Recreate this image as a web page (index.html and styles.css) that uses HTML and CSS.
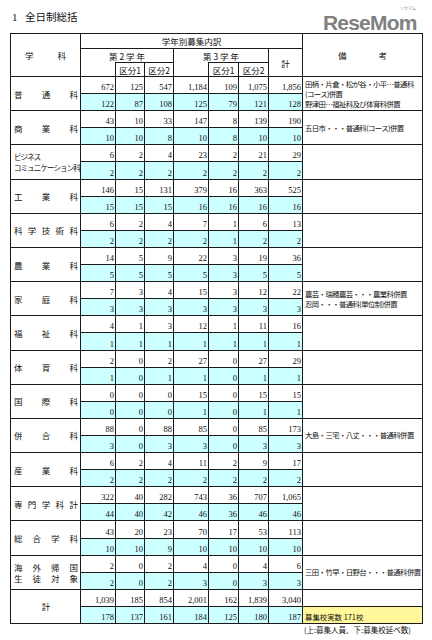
FILE: index.html
```html
<!DOCTYPE html>
<html lang="ja">
<head>
<meta charset="utf-8">
<title>全日制総括</title>
<link rel="stylesheet" href="styles.css">
</head>
<body>
<div class="page">
  <div class="title"><span class="num">1</span><span class="ttl">全日制総括</span></div>
  <div class="logo"><span class="kana">リセマム</span><span class="word">ReseMom</span></div>
  <table class="grid">
    <colgroup>
      <col class="c-subj"><col class="c-a"><col class="c-b"><col class="c-b"><col class="c-a"><col class="c-c"><col class="c-c"><col class="c-t"><col class="c-note">
    </colgroup>
    <thead>
      <tr class="h1">
        <th rowspan="3" class="hsubj"><span>学</span><span>科</span></th>
        <th colspan="7">学年別募集内訳</th>
        <th rowspan="3" class="hnote"><span>備</span><span>考</span></th>
      </tr>
      <tr class="h2">
        <th colspan="3" class="year">第 2 学 年</th>
        <th colspan="3" class="year">第 3 学 年</th>
        <th rowspan="2">計</th>
      </tr>
      <tr class="h3">
        <th class="blank"></th><th>区分1</th><th>区分2</th>
        <th class="blank"></th><th>区分1</th><th>区分2</th>
      </tr>
    </thead>
    <tbody>
      <tr class="top"><td rowspan="2" class="subj"><div class="dist"><span>普</span><span>通</span><span>科</span></div></td><td>672</td><td>125</td><td>547</td><td>1,184</td><td>109</td><td>1,075</td><td>1,856</td><td rowspan="2" class="note">田柄・片倉・松が谷・小平…普通科<br>(コース)併置<br>野津田…福祉科及び体育科併置</td></tr>
      <tr class="bot"><td>122</td><td>87</td><td>108</td><td>125</td><td>79</td><td>121</td><td>128</td></tr>

      <tr class="top"><td rowspan="2" class="subj"><div class="dist"><span>商</span><span>業</span><span>科</span></div></td><td>43</td><td>10</td><td>33</td><td>147</td><td>8</td><td>139</td><td>190</td><td rowspan="2" class="note">五日市・・・普通科(コース)併置</td></tr>
      <tr class="bot"><td>10</td><td>10</td><td>8</td><td>10</td><td>8</td><td>10</td><td>10</td></tr>

      <tr class="top"><td rowspan="2" class="subj"><div class="lines"><span>ビジネス</span><span>コミュニケーション科</span></div></td><td>6</td><td>2</td><td>4</td><td>23</td><td>2</td><td>21</td><td>29</td><td rowspan="2" class="note"></td></tr>
      <tr class="bot"><td>2</td><td>2</td><td>2</td><td>2</td><td>2</td><td>2</td><td>2</td></tr>

      <tr class="top"><td rowspan="2" class="subj"><div class="dist"><span>工</span><span>業</span><span>科</span></div></td><td>146</td><td>15</td><td>131</td><td>379</td><td>16</td><td>363</td><td>525</td><td rowspan="2" class="note"></td></tr>
      <tr class="bot"><td>15</td><td>15</td><td>15</td><td>16</td><td>16</td><td>16</td><td>16</td></tr>

      <tr class="top"><td rowspan="2" class="subj"><div class="dist"><span>科</span><span>学</span><span>技</span><span>術</span><span>科</span></div></td><td>6</td><td>2</td><td>4</td><td>7</td><td>1</td><td>6</td><td>13</td><td rowspan="2" class="note"></td></tr>
      <tr class="bot"><td>2</td><td>2</td><td>2</td><td>2</td><td>1</td><td>2</td><td>2</td></tr>

      <tr class="top"><td rowspan="2" class="subj"><div class="dist"><span>農</span><span>業</span><span>科</span></div></td><td>14</td><td>5</td><td>9</td><td>22</td><td>3</td><td>19</td><td>36</td><td rowspan="2" class="note"></td></tr>
      <tr class="bot"><td>5</td><td>5</td><td>5</td><td>5</td><td>3</td><td>5</td><td>5</td></tr>

      <tr class="top"><td rowspan="2" class="subj"><div class="dist"><span>家</span><span>庭</span><span>科</span></div></td><td>7</td><td>3</td><td>4</td><td>15</td><td>3</td><td>12</td><td>22</td><td rowspan="2" class="note">農芸・瑞穂農芸・・・農業科併置<br>忍岡・・・普通科(単位制)併置</td></tr>
      <tr class="bot"><td>3</td><td>3</td><td>3</td><td>3</td><td>3</td><td>3</td><td>3</td></tr>

      <tr class="top"><td rowspan="2" class="subj"><div class="dist"><span>福</span><span>祉</span><span>科</span></div></td><td>4</td><td>1</td><td>3</td><td>12</td><td>1</td><td>11</td><td>16</td><td rowspan="2" class="note"></td></tr>
      <tr class="bot"><td>1</td><td>1</td><td>1</td><td>1</td><td>1</td><td>1</td><td>1</td></tr>

      <tr class="top"><td rowspan="2" class="subj"><div class="dist"><span>体</span><span>育</span><span>科</span></div></td><td>2</td><td>0</td><td>2</td><td>27</td><td>0</td><td>27</td><td>29</td><td rowspan="2" class="note"></td></tr>
      <tr class="bot"><td>1</td><td>0</td><td>1</td><td>1</td><td>0</td><td>1</td><td>1</td></tr>

      <tr class="top"><td rowspan="2" class="subj"><div class="dist"><span>国</span><span>際</span><span>科</span></div></td><td>0</td><td>0</td><td>0</td><td>15</td><td>0</td><td>15</td><td>15</td><td rowspan="2" class="note"></td></tr>
      <tr class="bot"><td>0</td><td>0</td><td>0</td><td>1</td><td>0</td><td>1</td><td>1</td></tr>

      <tr class="top"><td rowspan="2" class="subj"><div class="dist"><span>併</span><span>合</span><span>科</span></div></td><td>88</td><td>0</td><td>88</td><td>85</td><td>0</td><td>85</td><td>173</td><td rowspan="2" class="note">大島・三宅・八丈・・・普通科併置</td></tr>
      <tr class="bot"><td>3</td><td>0</td><td>3</td><td>3</td><td>0</td><td>3</td><td>3</td></tr>

      <tr class="top"><td rowspan="2" class="subj"><div class="dist"><span>産</span><span>業</span><span>科</span></div></td><td>6</td><td>2</td><td>4</td><td>11</td><td>2</td><td>9</td><td>17</td><td rowspan="2" class="note"></td></tr>
      <tr class="bot"><td>2</td><td>2</td><td>2</td><td>2</td><td>2</td><td>2</td><td>2</td></tr>

      <tr class="top"><td rowspan="2" class="subj"><div class="dist"><span>専</span><span>門</span><span>学</span><span>科</span><span>計</span></div></td><td>322</td><td>40</td><td>282</td><td>743</td><td>36</td><td>707</td><td>1,065</td><td rowspan="2" class="note"></td></tr>
      <tr class="bot"><td>44</td><td>40</td><td>42</td><td>46</td><td>36</td><td>46</td><td>46</td></tr>

      <tr class="top"><td rowspan="2" class="subj"><div class="dist"><span>総</span><span>合</span><span>学</span><span>科</span></div></td><td>43</td><td>20</td><td>23</td><td>70</td><td>17</td><td>53</td><td>113</td><td rowspan="2" class="note"></td></tr>
      <tr class="bot"><td>10</td><td>10</td><td>9</td><td>10</td><td>10</td><td>10</td><td>10</td></tr>

      <tr class="top"><td rowspan="2" class="subj"><div class="stack"><div class="dist"><span>海</span><span>外</span><span>帰</span><span>国</span></div><div class="dist"><span>生</span><span>徒</span><span>対</span><span>象</span></div></div></td><td>2</td><td>0</td><td>2</td><td>4</td><td>0</td><td>4</td><td>6</td><td rowspan="2" class="note">三田・竹早・日野台・・・普通科併置</td></tr>
      <tr class="bot"><td>2</td><td>0</td><td>2</td><td>3</td><td>0</td><td>3</td><td>3</td></tr>

      <tr class="top"><td rowspan="2" class="subj total">計</td><td>1,039</td><td>185</td><td>854</td><td>2,001</td><td>162</td><td>1,839</td><td>3,040</td><td class="note"></td></tr>
      <tr class="bot"><td>178</td><td>137</td><td>161</td><td>184</td><td>125</td><td>180</td><td>187</td><td class="note sum">募集校実数 171校</td></tr>
    </tbody>
  </table>
  <div class="foot">(上:募集人員、下:募集校延べ数)</div>
</div>
</body>
</html>
```

FILE: styles.css
```css
html, body {
  margin: 0;
  padding: 0;
  background: #ffffff;
}

body {
  font-family: "Noto Sans CJK JP", "Liberation Sans", sans-serif;
  color: #111;
}

.page {
  position: relative;
  width: 432px;
  height: 640px;
  padding: 0 0 0 10px;
  box-sizing: border-box;
}

.title {
  display: flex;
  align-items: center;
  height: 14px;
  padding: 10px 0 9px 2px;
  font-size: 10.5px;
  line-height: 14px;
}

.title .num {
  font-family: "Liberation Serif", serif;
  font-size: 11px;
  width: 13px;
}

.logo {
  position: absolute;
  left: 323px;
  top: 13px;
  width: 100px;
  height: 20px;
}

.logo .word {
  display: block;
  font-family: "Liberation Sans", sans-serif;
  font-weight: 700;
  font-size: 21px;
  letter-spacing: -0.8px;
  color: #808080;
  line-height: 20px;
}

.logo .kana {
  position: absolute;
  left: 77px;
  top: -7px;
  font-family: "Noto Sans CJK JP", sans-serif;
  font-size: 4px;
  line-height: 4px;
  color: #909090;
}

.grid {
  border-collapse: collapse;
  table-layout: fixed;
  width: 412px;
  border: 1.5px solid #000;
}

.c-subj { width: 70px; }
.c-a { width: 35px; }
.c-b { width: 29px; }
.c-c { width: 30px; }
.c-t { width: 34px; }
.c-note { width: 120px; }

.grid th,
.grid td {
  border: 1px solid #1a1a1a;
  padding: 0;
  overflow: hidden;
  white-space: nowrap;
}

.grid th {
  font-weight: 400;
  font-size: 8.5px;
  line-height: 10px;
  text-align: center;
  vertical-align: middle;
}

.h1 { height: 15px; }
.h2 { height: 14px; }
.h3 { height: 14px; }

.grid th.blank {
  border-top: hidden;
}

.grid th.hsubj span {
  display: inline-block;
  margin: 0 12px;
}

.grid th.hnote span {
  display: inline-block;
  margin: 0 16px;
}

.grid tbody tr {
  height: 17.1px;
}

.grid tbody td {
  font-family: "Liberation Serif", serif;
  font-size: 8.5px;
  line-height: 10px;
  text-align: right;
  vertical-align: bottom;
  padding: 0 1px 1px 0;
}

.grid tbody tr.bot td {
  background: #ccffff;
}

.grid tbody td.subj {
  background: #ffffff;
  font-family: "Noto Sans CJK JP", sans-serif;
  font-size: 8.5px;
  text-align: left;
  vertical-align: middle;
  padding: 0 2px 0 3px;
}

.grid tbody td.subj.total {
  text-align: center;
}

.dist {
  display: flex;
  justify-content: space-between;
  line-height: 10px;
}

.stack {
  display: flex;
  flex-direction: column;
  gap: 1px;
}

.lines {
  display: flex;
  flex-direction: column;
  font-size: 7.5px;
  line-height: 11px;
  letter-spacing: -0.9px;
}

.grid tbody td.note {
  background: #ffffff;
  font-family: "Noto Sans CJK JP", sans-serif;
  font-size: 7.4px;
  line-height: 10px;
  letter-spacing: -0.6px;
  text-align: left;
  vertical-align: middle;
  padding: 0 0 0 2px;
}

.grid tbody tr.bot td.note.sum {
  background: #fff79a;
  vertical-align: bottom;
  padding-bottom: 1px;
  letter-spacing: 0;
}

.foot {
  font-size: 7.5px;
  line-height: 10px;
  padding: 1px 0 0 294px;
}
```
